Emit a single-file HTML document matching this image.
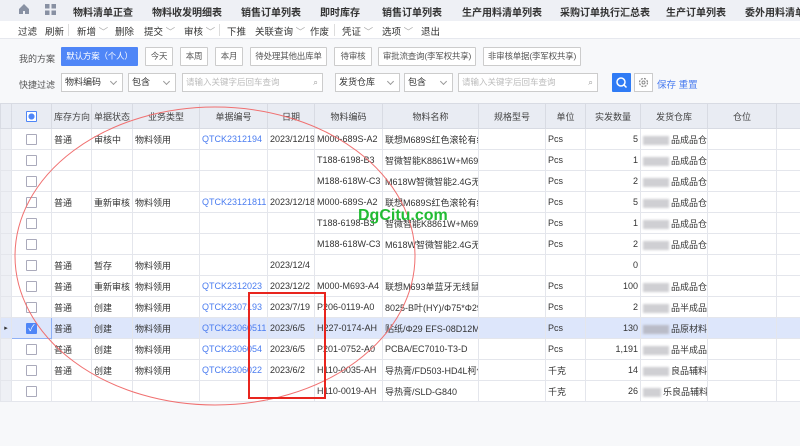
<!DOCTYPE html><html><head><meta charset="utf-8"><style>
*{margin:0;padding:0;box-sizing:border-box}
body{width:800px;height:446px;overflow:hidden;background:#f7f8fa;font-family:"Liberation Sans","Noto Sans CJK SC",sans-serif;font-size:10px;color:#333;position:relative}
.a{position:absolute;white-space:nowrap}
.tabs{position:absolute;left:0;top:0;width:800px;height:21px;background:#eef0f5}
.tb{position:absolute;left:0;top:21px;width:800px;height:18px;background:#fff;border-bottom:1px solid #e6e8ee}
.btn{position:absolute;height:19px;border:1px solid #ccc;background:#fff;color:#555;font-size:8.5px;line-height:17px;text-align:center;border-radius:1px;white-space:nowrap;overflow:hidden;letter-spacing:-0.2px}
.sel{position:absolute;height:19px;border:1px solid #ccc;background:#fff;color:#333;font-size:9px;line-height:17px;padding-left:3px;white-space:nowrap}
.sel:after{content:"";position:absolute;right:6px;top:5px;width:4px;height:4px;border-right:1px solid #999;border-bottom:1px solid #999;transform:rotate(45deg)}
.inp{position:absolute;height:19px;border:1px solid #ccc;background:#fff;color:#bbb;font-size:8.5px;line-height:17px;padding-left:3px;white-space:nowrap}
table{position:absolute;left:0;top:103px;border-collapse:collapse;table-layout:fixed;width:800px;background:#fff}
td{border:1px solid #e4e6ec;height:21px;font-size:9px;padding:0 2px;overflow:hidden;white-space:nowrap;color:#333}
tr.h td{height:25px;background:#e9ecf3;text-align:center;color:#444;border-color:#d8dbe3}
td.i{background:#eef0f5;padding:0}
.cb{display:inline-block;width:11px;height:11px;border:1px solid #aab;border-radius:1px;background:#fff;vertical-align:middle}
.c{text-align:center}.r{text-align:right}
.l{color:#4a7cf0}
tr.s td{background:#dde6fb}
.blur{display:inline-block;width:26px;height:9px;background:#cfcfd3;vertical-align:middle;margin-right:2px;filter:blur(1px)}
</style></head><body>
<div class="tabs">
<div class="a" style="left:18px;top:3px;width:12px;height:12px"><svg width="12" height="12"><path d="M1 6L6 1L11 6V11H7V8H5V11H1Z" fill="#8891a3"/></svg></div>
<div class="a" style="left:45px;top:4px"><svg width="11" height="11"><rect x="0" y="0" width="4.5" height="4.5" fill="#8891a3"/><rect x="6.5" y="0" width="4.5" height="4.5" fill="#8891a3"/><rect x="0" y="6.5" width="4.5" height="4.5" fill="#8891a3"/><rect x="6.5" y="6.5" width="4.5" height="4.5" fill="#8891a3"/></svg></div>
<div class="a" style="left:73px;top:4px;font-size:10px;font-weight:bold;color:#333">物料清单正查</div>
<div class="a" style="left:152px;top:4px;font-size:10px;font-weight:bold">物料收发明细表</div>
<div class="a" style="left:241px;top:4px;font-size:10px;font-weight:bold">销售订单列表</div>
<div class="a" style="left:320px;top:4px;font-size:10px;font-weight:bold">即时库存</div>
<div class="a" style="left:382px;top:4px;font-size:10px;font-weight:bold">销售订单列表</div>
<div class="a" style="left:462px;top:4px;font-size:10px;font-weight:bold">生产用料清单列表</div>
<div class="a" style="left:560px;top:4px;font-size:10px;font-weight:bold">采购订单执行汇总表</div>
<div class="a" style="left:666px;top:4px;font-size:10px;font-weight:bold">生产订单列表</div>
<div class="a" style="left:745px;top:4px;font-size:10px;font-weight:bold">委外用料清单列</div>
</div>
<div class="tb">
<div class="a" style="left:18px;top:3px;font-size:9.5px">过滤</div>
<div class="a" style="left:45px;top:3px;font-size:9.5px">刷新</div>
<div class="a" style="left:68px;top:3px;width:1px;height:12px;background:#ddd"></div>
<div class="a" style="left:77px;top:3px;font-size:9.5px">新增 <span style="color:#aaa">﹀</span></div>
<div class="a" style="left:115px;top:3px;font-size:9.5px">删除</div>
<div class="a" style="left:144px;top:3px;font-size:9.5px">提交 <span style="color:#aaa">﹀</span></div>
<div class="a" style="left:184px;top:3px;font-size:9.5px">审核 <span style="color:#aaa">﹀</span></div>
<div class="a" style="left:219px;top:3px;width:1px;height:12px;background:#ddd"></div>
<div class="a" style="left:227px;top:3px;font-size:9.5px">下推</div>
<div class="a" style="left:255px;top:3px;font-size:9.5px">关联查询 <span style="color:#aaa">﹀</span></div>
<div class="a" style="left:310px;top:3px;font-size:9.5px">作废</div>
<div class="a" style="left:334px;top:3px;width:1px;height:12px;background:#ddd"></div>
<div class="a" style="left:342px;top:3px;font-size:9.5px">凭证 <span style="color:#aaa">﹀</span></div>
<div class="a" style="left:382px;top:3px;font-size:9.5px">选项 <span style="color:#aaa">﹀</span></div>
<div class="a" style="left:421px;top:3px;font-size:9.5px">退出</div>
</div>
<div class="a" style="left:19px;top:52px;font-size:9px;color:#555">我的方案</div>
<div class="btn" style="left:61px;top:47px;width:77px;background:#4f86f7;border-color:#4f86f7;color:#fff">默认方案（个人）</div>
<div class="btn" style="left:145px;top:47px;width:28px">今天</div>
<div class="btn" style="left:180px;top:47px;width:28px">本周</div>
<div class="btn" style="left:215px;top:47px;width:28px">本月</div>
<div class="btn" style="left:250px;top:47px;width:77px">待处理其他出库单</div>
<div class="btn" style="left:334px;top:47px;width:38px">待审核</div>
<div class="btn" style="left:378px;top:47px;width:98px">审批流查询(李军权共享)</div>
<div class="btn" style="left:483px;top:47px;width:98px">非审核单据(李军权共享)</div>
<div class="a" style="left:19px;top:78px;font-size:9px;color:#555">快捷过滤</div>
<div class="sel" style="left:61px;top:73px;width:62px">物料编码</div>
<div class="sel" style="left:128px;top:73px;width:48px">包含</div>
<div class="inp" style="left:182px;top:73px;width:141px">请输入关键字后回车查询<span style="position:absolute;right:4px;color:#999">⌕</span></div>
<div class="sel" style="left:335px;top:73px;width:65px">发货仓库</div>
<div class="sel" style="left:404px;top:73px;width:49px">包含</div>
<div class="inp" style="left:458px;top:73px;width:140px">请输入关键字后回车查询<span style="position:absolute;right:4px;color:#999">⌕</span></div>
<div class="a" style="left:612px;top:73px;width:19px;height:19px;background:#2f7bf5;border-radius:1px"><svg width="19" height="19"><circle cx="9" cy="9" r="4" stroke="#fff" stroke-width="1.5" fill="none"/><path d="M12 12L14.5 14.5" stroke="#fff" stroke-width="1.5"/></svg></div>
<div class="a" style="left:634px;top:73px;width:19px;height:19px;border:1px solid #ccc;background:#fff"><svg width="17" height="17"><circle cx="8.5" cy="8.5" r="4" stroke="#888" stroke-width="1.2" fill="none" stroke-dasharray="2 1.2"/><circle cx="8.5" cy="8.5" r="1.5" stroke="#888" fill="none"/></svg></div>
<div class="a" style="left:657px;top:77px;font-size:9.5px;color:#4a7cf0">保存 重置</div>
<table>
<colgroup><col style="width:11px"><col style="width:40px"><col style="width:40px"><col style="width:41px"><col style="width:67px"><col style="width:68px"><col style="width:47px"><col style="width:68px"><col style="width:96px"><col style="width:67px"><col style="width:40px"><col style="width:55px"><col style="width:67px"><col style="width:69px"><col style="width:24px"></colgroup>
<tr class="h"><td class="i"></td><td><span class="cb" style="border-color:#4f86f7;background:radial-gradient(#4f86f7 45%,#fff 50%)"></span></td><td>库存方向</td><td>单据状态</td><td>业务类型</td><td class="l">单据编号</td><td>日期</td><td>物料编码</td><td>物料名称</td><td>规格型号</td><td>单位</td><td>实发数量</td><td>发货仓库</td><td>仓位</td><td></td></tr>
<tr><td class="i"></td><td class="c"><span class="cb"></span></td><td>普通</td><td>审核中</td><td>物料领用</td><td class="l">QTCK2312194</td><td>2023/12/19</td><td>M000-689S-A2</td><td>联想M689S红色滚轮有线</td><td></td><td>Pcs</td><td class="r">5</td><td><span class="blur"></span>品成品仓</td><td></td><td></td></tr>
<tr><td class="i"></td><td class="c"><span class="cb"></span></td><td></td><td></td><td></td><td></td><td></td><td>T188-6198-B3</td><td>智微智能K8861W+M696</td><td></td><td>Pcs</td><td class="r">1</td><td><span class="blur"></span>品成品仓</td><td></td><td></td></tr>
<tr><td class="i"></td><td class="c"><span class="cb"></span></td><td></td><td></td><td></td><td></td><td></td><td>M188-618W-C3</td><td>M618W智微智能2.4G无线</td><td></td><td>Pcs</td><td class="r">2</td><td><span class="blur"></span>品成品仓</td><td></td><td></td></tr>
<tr><td class="i"></td><td class="c"><span class="cb"></span></td><td>普通</td><td>重新审核</td><td>物料领用</td><td class="l">QTCK23121811</td><td>2023/12/18</td><td>M000-689S-A2</td><td>联想M689S红色滚轮有线</td><td></td><td>Pcs</td><td class="r">5</td><td><span class="blur"></span>品成品仓</td><td></td><td></td></tr>
<tr><td class="i"></td><td class="c"><span class="cb"></span></td><td></td><td></td><td></td><td></td><td></td><td>T188-6198-B3</td><td>智微智能K8861W+M696</td><td></td><td>Pcs</td><td class="r">1</td><td><span class="blur"></span>品成品仓</td><td></td><td></td></tr>
<tr><td class="i"></td><td class="c"><span class="cb"></span></td><td></td><td></td><td></td><td></td><td></td><td>M188-618W-C3</td><td>M618W智微智能2.4G无线</td><td></td><td>Pcs</td><td class="r">2</td><td><span class="blur"></span>品成品仓</td><td></td><td></td></tr>
<tr><td class="i"></td><td class="c"><span class="cb"></span></td><td>普通</td><td>暂存</td><td>物料领用</td><td></td><td>2023/12/4</td><td></td><td></td><td></td><td></td><td class="r">0</td><td></td><td></td><td></td></tr>
<tr><td class="i"></td><td class="c"><span class="cb"></span></td><td>普通</td><td>重新审核</td><td>物料领用</td><td class="l">QTCK2312023</td><td>2023/12/2</td><td>M000-M693-A4</td><td>联想M693单蓝牙无线鼠标</td><td></td><td>Pcs</td><td class="r">100</td><td><span class="blur"></span>品成品仓</td><td></td><td></td></tr>
<tr><td class="i"></td><td class="c"><span class="cb"></span></td><td>普通</td><td>创建</td><td>物料领用</td><td class="l">QTCK2307193</td><td>2023/7/19</td><td>P206-0119-A0</td><td>8025-B叶(HY)/Φ75*Φ29</td><td></td><td>Pcs</td><td class="r">2</td><td><span class="blur"></span>品半成品仓</td><td></td><td></td></tr>
<tr class="s"><td class="i" style="font-size:7px;color:#333;text-align:center">▸</td><td class="c" style="border:1px solid #8fb0f5"><span class="cb" style="background:#4f86f7;border-color:#4f86f7;color:#fff;font-size:9px;line-height:9px;text-align:center">✓</span></td><td>普通</td><td>创建</td><td>物料领用</td><td class="l">QTCK23060511</td><td>2023/6/5</td><td>H227-0174-AH</td><td>贴纸/Φ29 EFS-08D12M</td><td></td><td>Pcs</td><td class="r">130</td><td><span class="blur" style="background:#b9bcc8"></span>品原材料仓</td><td></td><td></td></tr>
<tr><td class="i"></td><td class="c"><span class="cb"></span></td><td>普通</td><td>创建</td><td>物料领用</td><td class="l">QTCK2306054</td><td>2023/6/5</td><td>P201-0752-A0</td><td>PCBA/EC7010-T3-D</td><td></td><td>Pcs</td><td class="r">1,191</td><td><span class="blur"></span>品半成品仓</td><td></td><td></td></tr>
<tr><td class="i"></td><td class="c"><span class="cb"></span></td><td>普通</td><td>创建</td><td>物料领用</td><td class="l">QTCK2306022</td><td>2023/6/2</td><td>H110-0035-AH</td><td>导热膏/FD503-HD4L柯仕</td><td></td><td>千克</td><td class="r">14</td><td><span class="blur"></span>良品辅料仓</td><td></td><td></td></tr>
<tr><td class="i"></td><td class="c"><span class="cb"></span></td><td></td><td></td><td></td><td></td><td></td><td>H110-0019-AH</td><td>导热膏/SLD-G840</td><td></td><td>千克</td><td class="r">26</td><td><span class="blur" style="width:18px"></span>乐良品辅料仓</td><td></td><td></td></tr>
</table>
<svg class="a" style="left:0;top:0" width="800" height="446"><ellipse cx="215" cy="256" rx="200" ry="149" fill="none" stroke="#f07070" stroke-width="1"/><rect x="249" y="293" width="76" height="105" fill="none" stroke="#e8251e" stroke-width="2"/></svg>
<div class="a" style="left:358px;top:207px;font-size:16px;font-weight:bold;color:#22bb33">DgCitu.com</div>
</body></html>
